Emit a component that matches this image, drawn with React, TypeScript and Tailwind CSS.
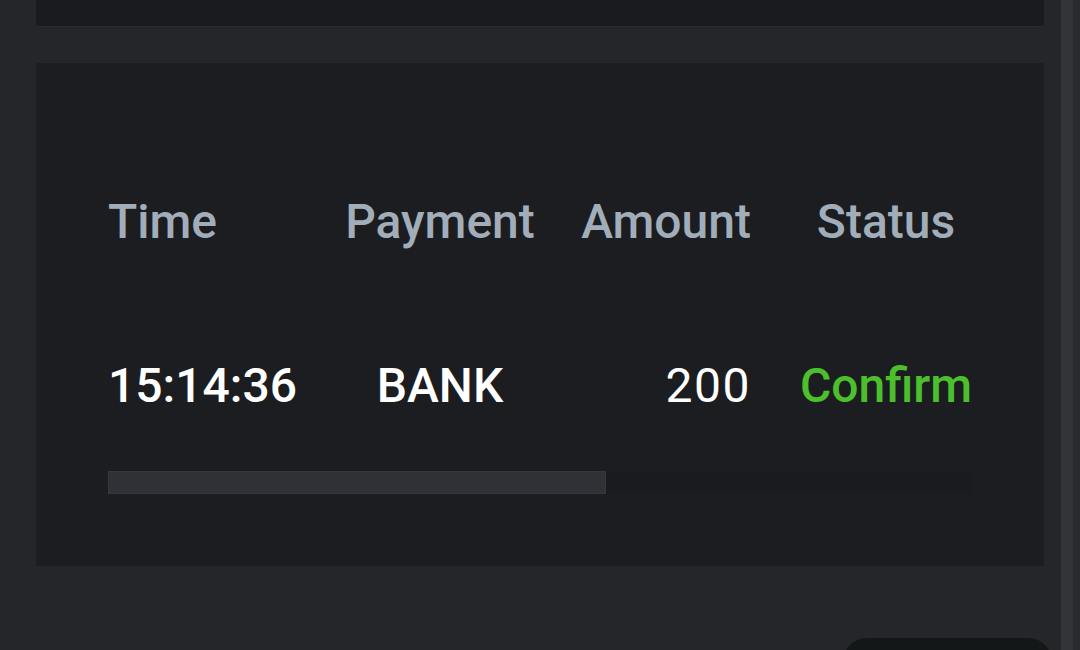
import React from "react";

interface Deposit {
  time: string;
  payment: string;
  amount: number;
  status: string;
}

const rows: Deposit[] = [
  { time: "15:14:36", payment: "BANK", amount: 200, status: "Confirm" },
];

const cols = "grid grid-cols-[222px_220px_201px_221px]";

const App = () => {
  return (
    <div
      className="relative flex h-[650px] w-full overflow-hidden bg-[#25262a]"
      style={{ fontFamily: "Roboto, 'Noto Sans', sans-serif" }}
    >
      <div className="flex flex-1 flex-col pl-[36px] pr-[17px]">
        <div className="h-[27px] rounded-b-[3px] border-b border-[#2c2d31] bg-[#1a1b1f]" />

        <div className="mt-[36px] bg-[#1c1d21] pl-[72px] pr-[72px] pt-[131px] pb-[72px]">
          <div className="w-[864px] overflow-hidden">
            <div className={`${cols} text-[48px] font-medium leading-[56px] text-[#a2adba]`}>
              <div>Time</div>
              <div className="text-center">Payment</div>
              <div className="text-right">Amount</div>
              <div className="pl-[49px] text-center">Status</div>
            </div>

            {rows.map((row, index) => (
              <div
                key={`${row.time}-${index}`}
                className={`${cols} mt-[108px] text-[48px] leading-[56px] text-white`}
              >
                <div className="font-medium">{row.time}</div>
                <div className="text-center font-medium">{row.payment}</div>
                <div className="text-right font-normal tracking-[1.5px]">{row.amount}</div>
                <div className="pl-[49px] text-center font-medium text-[#4cc02c]">
                  {row.status}
                </div>
              </div>
            ))}

            <div className="mt-[57px] flex h-[23px] w-[864px] bg-[#1a1b1e]">
              <div className="h-full w-[498px] border border-[#37383d] bg-[#303136]" />
            </div>
          </div>
        </div>
      </div>

      <div className="w-[12px] bg-[#333437]" />
      <div className="w-[7px] bg-[#2a2b2e]" />

      <div className="absolute left-[843px] top-[638px] h-[40px] w-[209px] rounded-t-[24px] bg-[#141718]" />
    </div>
  );
};

export default App;
